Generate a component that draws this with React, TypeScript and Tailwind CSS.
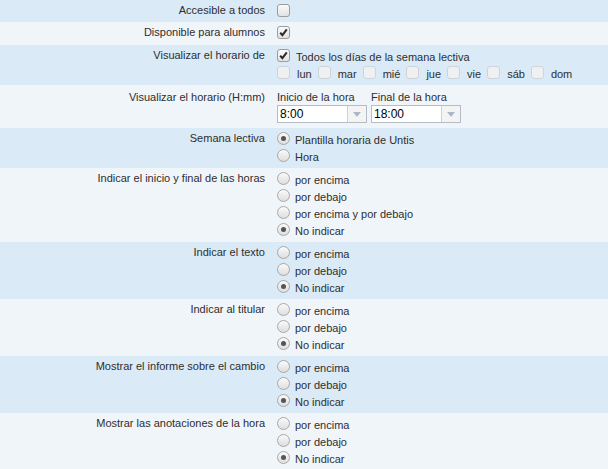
import React from 'react';

const BLUE = 'bg-[#daeaf7]';
const LIGHT = 'bg-[#f0f5fa]';

const Check: React.FC<{ checked?: boolean; disabled?: boolean }> = ({ checked, disabled }) => (
  <span
    className={`inline-flex h-[13px] w-[13px] shrink-0 items-center justify-center rounded-[3px] border ${
      disabled
        ? 'border-[#cfd3d8] bg-[#eef0f2]'
        : 'border-[#9c9c9c] bg-gradient-to-b from-[#fbfbfb] to-[#e2e2e2]'
    }`}
  >
    {checked && (
      <svg width="9" height="9" viewBox="0 0 9 9">
        <path d="M1.2 4.8 L3.4 7.2 L7.8 1.4" fill="none" stroke="#2a2a2a" strokeWidth="2" />
      </svg>
    )}
  </span>
);

const Radio: React.FC<{ checked?: boolean }> = ({ checked }) => (
  <span className="inline-flex h-[13px] w-[13px] shrink-0 items-center justify-center rounded-full border border-[#a8a8a8] bg-gradient-to-b from-[#fafafa] to-[#dedede]">
    {checked && <span className="h-[5px] w-[5px] rounded-full bg-[#555]" />}
  </span>
);

const Row: React.FC<{ label: string; bg: string; className?: string; children: React.ReactNode }> = ({
  label,
  bg,
  className = 'pt-[2px] pb-[4px]',
  children,
}) => (
  <div className={`flex ${bg} ${className}`}>
    <div className="w-[265px] shrink-0 text-right leading-[17px]">{label}</div>
    <div className="ml-[12px] flex flex-col">{children}</div>
  </div>
);

const RadioGroup: React.FC<{ options: string[]; selected: number }> = ({ options, selected }) => (
  <>
    {options.map((o, i) => (
      <div key={o} className="flex h-[17px] items-center">
        <Radio checked={i === selected} />
        <span className="ml-[5px] mt-[4px] leading-[15px]">{o}</span>
      </div>
    ))}
  </>
);

const TimeSelect: React.FC<{ value: string }> = ({ value }) => (
  <div className="flex h-[18px] w-[90px] border border-[#b4bcc6] bg-white">
    <div className="flex-1 pl-[2px] text-[12px] leading-[16px] text-black">{value}</div>
    <div className="flex w-[19px] items-center justify-center border-l border-[#ccd2d8] bg-[#f4f4f4]">
      <svg width="8" height="5" viewBox="0 0 8 5">
        <path d="M0 0 H8 L4 5 Z" fill="#a9b7c9" />
      </svg>
    </div>
  </div>
);

const days = ['lun', 'mar', 'mié', 'jue', 'vie', 'sáb', 'dom'];
const above = ['por encima', 'por debajo', 'No indicar'];

export default function App() {
  return (
    <div className="h-[469px] w-[608px] overflow-hidden bg-[#f0f5fa] font-['Liberation_Sans',Arial,sans-serif] text-[11px] text-[#2e2e2e]">
      <Row label="Accesible a todos" bg={BLUE} className="pt-[2px] pb-[3px]">
        <div className="flex h-[17px] items-center">
          <Check />
        </div>
      </Row>
      <Row label="Disponible para alumnos" bg={LIGHT}>
        <div className="flex h-[17px] items-center">
          <Check checked />
        </div>
      </Row>
      <Row label="Visualizar el horario de" bg={BLUE}>
        <div className="flex h-[17px] items-center">
          <Check checked />
          <span className="ml-[6px] mt-[4px] leading-[15px]">Todos los días de la semana lectiva</span>
        </div>
        <div className="flex h-[17px] items-center">
          {days.map(d => (
            <React.Fragment key={d}>
              <Check disabled />
              <span className="ml-[7px] mr-[6px] mt-[4px] leading-[15px]">{d}</span>
            </React.Fragment>
          ))}
        </div>
      </Row>
      <Row label="Visualizar el horario (H:mm)" bg={LIGHT} className="pt-[4px] pb-[5px]">
        <div className="flex gap-[4px]">
          <div className="flex flex-col">
            <span className="leading-[16px]">Inicio de la hora</span>
            <TimeSelect value="8:00" />
          </div>
          <div className="flex flex-col">
            <span className="leading-[16px]">Final de la hora</span>
            <TimeSelect value="18:00" />
          </div>
        </div>
      </Row>
      <Row label="Semana lectiva" bg={BLUE}>
        <RadioGroup options={['Plantilla horaria de Untis', 'Hora']} selected={0} />
      </Row>
      <Row label="Indicar el inicio y final de las horas" bg={LIGHT}>
        <RadioGroup options={['por encima', 'por debajo', 'por encima y por debajo', 'No indicar']} selected={3} />
      </Row>
      <Row label="Indicar el texto" bg={BLUE}>
        <RadioGroup options={above} selected={2} />
      </Row>
      <Row label="Indicar al titular" bg={LIGHT}>
        <RadioGroup options={above} selected={2} />
      </Row>
      <Row label="Mostrar el informe sobre el cambio" bg={BLUE}>
        <RadioGroup options={above} selected={2} />
      </Row>
      <Row label="Mostrar las anotaciones de la hora" bg={LIGHT}>
        <RadioGroup options={above} selected={2} />
      </Row>
    </div>
  );
}
